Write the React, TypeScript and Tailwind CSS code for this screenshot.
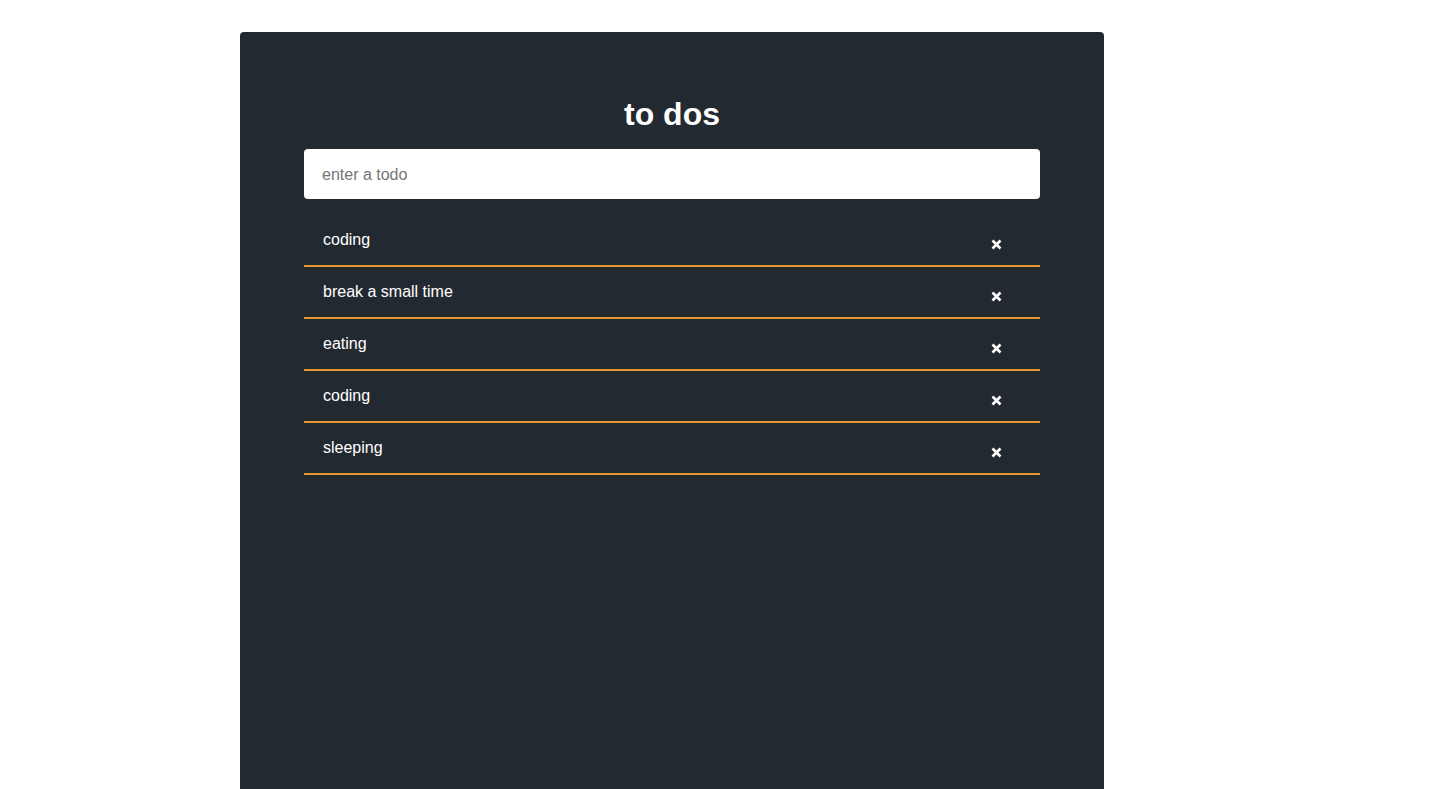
const todos = ["coding", "break a small time", "eating", "coding", "sleeping"];

const CloseIcon = () => (
  <svg width="11" height="11" viewBox="0 0 11 11" className="mt-2">
    <path d="M1.5 1.5 L9.5 9.5 M9.5 1.5 L1.5 9.5" stroke="white" strokeWidth="2.6" strokeLinecap="butt" />
  </svg>
);

export default function App() {
  return (
    <div className="min-h-screen bg-white font-['Liberation_Sans',Arial,sans-serif]">
      <div className="ml-[240px] mt-8 w-[864px] min-h-[780px] rounded-t bg-[#232931] px-16 pt-16">
        <h1 className="text-center text-[32px] leading-[37px] font-bold text-white">to dos</h1>
        <input
          className="mt-4 block h-[50px] w-full rounded bg-white px-[18px] pt-0.5 text-base text-black outline-none placeholder:text-[#757575]"
          placeholder="enter a todo"
        />
        <ul className="mt-4">
          {todos.map((todo, i) => (
            <li
              key={i}
              className="flex h-[52px] items-center justify-between border-b-2 border-[#e2982c] pl-[19px] pr-[38px] text-base text-white"
            >
              <span>{todo}</span>
              <CloseIcon />
            </li>
          ))}
        </ul>
      </div>
    </div>
  );
}
